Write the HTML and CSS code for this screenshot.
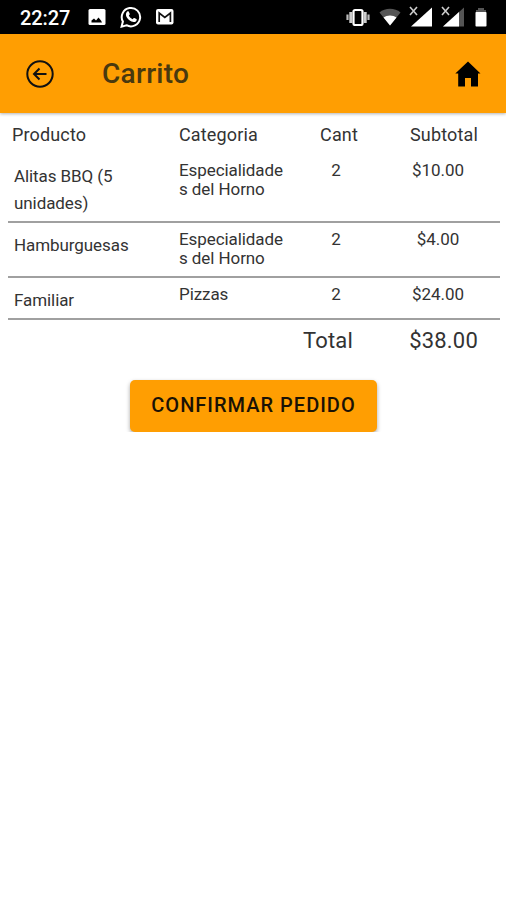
FILE: index.html
```html
<!DOCTYPE html>
<html lang="es">
<head>
    <meta charset="UTF-8">
    <meta name="viewport" content="width=device-width, initial-scale=1.0">
    <title>Carrito</title>
    <link rel="stylesheet" href="styles.css">
</head>
<body>

<div class="status-bar">
    <span class="clock">22:27</span>
    <svg class="status-image" width="18" height="18" viewBox="0 0 18 18">
        <rect x="0.5" y="1" width="17" height="16" rx="1.5" fill="#fff"/>
        <path d="M3.500 14.500v-2l2.500-2 2 2 2.500-3 2.500 3 1 2z" fill="#000"/>
    </svg>
    <svg class="status-whatsapp" width="22" height="22" viewBox="0 0 22 22">
        <path d="M1.6 20.6l1.3-5A9.2 9.2 0 1 1 6.5 19.2z" fill="none" stroke="#fff" stroke-width="2"/>
        <path d="M7.2 5.6c.5-.5 1.3-.5 1.6.1l.9 2c.2.4 0 .8-.9 1.8.9 1.8 2.1 2.9 3.900 3.700.8-1 1.200-1.300 1.700-1.100l2 .9c.5.3.4 1.200-.1 1.900-1.100 1.300-2.900 1.500-4.800.7-2.500-1-4.500-3.200-5.300-5.300-.6-1.900-.1-3.600 1-4.700z" fill="#fff"/>
    </svg>
    <svg class="status-mail" width="18" height="18" viewBox="0 0 18 18">
        <rect x="0" y="1" width="17.500" height="15.500" rx="2" fill="#fff"/>
        <path d="M3.200 14V5l5.600 4.500L14.400 5v9" fill="none" stroke="#111" stroke-width="1.700"/>
    </svg>

    <div class="status-right">
        <svg width="24" height="18" viewBox="0 0 24 18">
            <path d="M4.800 4v11M19.200 4v11" stroke="#ccc" stroke-width="3"/>
            <path d="M1.500 6.500v5.500M22.500 6.500v5.500" stroke="#bbb" stroke-width="2.200"/>
            <rect x="7.500" y="2" width="9" height="15" rx="1.500" fill="#000" stroke="#fff" stroke-width="2.200"/>
        </svg>
        <svg class="wifi" width="22" height="18" viewBox="0 0 22 18">
            <path d="M11 17.500L.5 4.500C6-.4 16-.4 21.500 4.500z" fill="#555"/>
            <path d="M11 17.500L4.500 9.500C8 6.800 14 6.800 17.500 9.500z" fill="#fff"/>
        </svg>
        <svg class="signal" width="24" height="22" viewBox="0 0 24 22">
            <path d="M23 1.500v19H2z" fill="#fff"/>
            <path d="M1 1l7 8M8 1l-7 8" stroke="#ccc" stroke-width="1.600"/>
        </svg>
        <svg class="signal" width="24" height="22" viewBox="0 0 24 22">
            <path d="M23 1.500v19H2z" fill="#555"/>
            <path d="M18 6v14.500H2z" fill="#fff"/>
            <path d="M1 1l7 8M8 1l-7 8" stroke="#ccc" stroke-width="1.600"/>
        </svg>
        <svg class="battery" width="12" height="20" viewBox="0 0 12 20">
            <path d="M3 1h6v2h2v3H1V3h2z" fill="#555"/>
            <rect x="0.500" y="5" width="11" height="14.500" rx="0.800" fill="#fff"/>
        </svg>
    </div>
</div>

<header class="toolbar">
    <svg class="back" width="28" height="28" viewBox="0 0 28 28" fill="none" stroke="#111" stroke-width="2">
        <circle cx="14" cy="14" r="12.700"/>
        <path d="M13.500 8.500L8 14l5.500 5.500M8.300 14H20.500"/>
    </svg>
    <h1>Carrito</h1>
    <svg class="home" width="26" height="26" viewBox="0 0 26 26">
        <path d="M13 .5L25.500 12.500H23V25.500H16V17H10V25.500H3.200V12.500H.3z" fill="#000"/>
    </svg>
</header>

<main class="cart">
    <div class="row head">
        <div class="product">Producto</div>
        <div class="category">Categoria</div>
        <div class="count">Cant</div>
        <div class="price">Subtotal</div>
    </div>
    <div class="row item">
        <div class="product">Alitas BBQ (5 unidades)</div>
        <div class="category">Especialidades del Horno</div>
        <div class="count">2</div>
        <div class="price">$10.00</div>
    </div>
    <div class="row item">
        <div class="product">Hamburguesas</div>
        <div class="category">Especialidades del Horno</div>
        <div class="count">2</div>
        <div class="price">$4.00</div>
    </div>
    <div class="row item">
        <div class="product">Familiar</div>
        <div class="category">Pizzas</div>
        <div class="count">2</div>
        <div class="price">$24.00</div>
    </div>
    <div class="total">
        <div class="total-label">Total</div>
        <div class="total-price">$38.00</div>
    </div>
    <button class="confirm">CONFIRMAR PEDIDO</button>
</main>

</body>
</html>
```
FILE: styles.css
```css
* {
    box-sizing: border-box;
}

body {
    margin: 0;
    font-family: Roboto, sans-serif;
    background-color: #fff;
    color: #333;
}

/* Status bar */
.status-bar {
    display: flex;
    align-items: center;
    height: 34px;
    padding: 0 19px 0 20px;
    background-color: #000;
    color: #fff;
}

.clock {
    width: 68px;
    font-size: 20px;
    font-weight: 500;
    line-height: 34px;
    letter-spacing: -0.1px;
    padding-top: 2px;
}

.status-whatsapp,
.status-mail {
    margin-left: 14px;
}

.status-right {
    display: flex;
    align-items: center;
    margin-left: auto;
}

.wifi {
    margin-left: 9px;
}

.signal {
    margin-left: 8px;
}

.battery {
    margin-left: 10px;
}

/* Toolbar */
.toolbar {
    display: flex;
    align-items: center;
    height: 79px;
    padding: 0 25px 0 26px;
    background-color: #ff9e02;
    box-shadow: 0 1px 3px rgba(0, 0, 0, 0.3);
}

.toolbar h1 {
    margin: 0 auto 0 48px;
    font-size: 28px;
    font-weight: 500;
    letter-spacing: 0.3px;
    color: #49390f;
}

/* Cart table */
.cart {
    display: flex;
    flex-direction: column;
    padding: 0 6px 0 8px;
}

.row {
    display: grid;
    grid-template-columns: 171px 108px 98px 106px;
    font-size: 17px;
    line-height: 19px;
    letter-spacing: -0.08px;
}

.row .count,
.row .price {
    text-align: center;
}

.head {
    height: 41px;
    padding-top: 12px;
    font-size: 18px;
    letter-spacing: 0.15px;
}

.head .product {
    padding-left: 4px;
}

.head .count {
    padding-left: 6px;
}

.head .price {
    padding-left: 12px;
}

.item {
    border-bottom: 2px solid #a0a0a0;
    padding: 7px 0 4px;
}

.item .product {
    padding: 2px 45px 0 6px;
    line-height: 27px;
}

.item .category {
    padding-bottom: 4px;
    word-break: break-all;
}

/* Total */
.total {
    display: grid;
    grid-template-columns: 1fr 147px;
    height: 60px;
    padding-top: 7px;
    font-size: 22px;
    line-height: 27px;
    letter-spacing: 0.2px;
}

.total-label {
    text-align: right;
}

.total-price {
    padding-right: 22px;
    text-align: right;
}

.confirm {
    align-self: center;
    width: 247px;
    height: 52px;
    margin-right: 1px;
    padding: 0 6px 2px;
    border: none;
    border-radius: 5px;
    background-color: #ff9e02;
    color: #1a1205;
    font-family: inherit;
    font-size: 20px;
    font-weight: 500;
    letter-spacing: 1px;
    box-shadow: 0 2px 4px rgba(0, 0, 0, 0.35);
    cursor: pointer;
}
```
